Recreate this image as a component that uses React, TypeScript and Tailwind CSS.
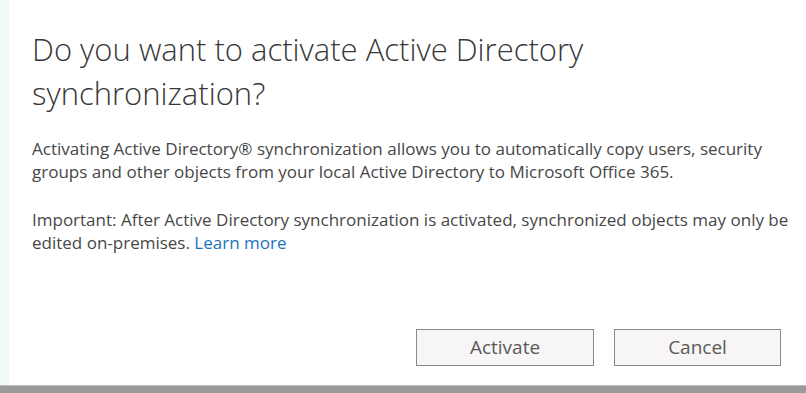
import React from "react";

export default function App() {
  return (
    <div className="flex h-[393px] w-[806px] flex-col overflow-hidden bg-white" style={{ fontFamily: '"Open Sans", "Noto Sans", sans-serif' }}>
      <div className="flex flex-1">
        <div className="w-[9px] shrink-0 bg-[#f2faf8]" />
        <div className="flex min-w-0 flex-1 flex-col pl-[23px] pr-[25px]">
          <h1 className="mt-[27px] text-[31px] font-light leading-[44px] text-[#383838]">
            Do you want to activate Active Directory
            <br />
            synchronization?
          </h1>
          <p className="mt-[22px] whitespace-nowrap text-[17px] leading-[23px] text-[#474747]">
            Activating Active Directory® synchronization allows you to automatically copy users, security
            <br />
            groups and other objects from your local Active Directory to Microsoft Office 365.
          </p>
          <p className="mt-[25px] whitespace-nowrap text-[17px] leading-[23px] text-[#474747]">
            Important: After Active Directory synchronization is activated, synchronized objects may only be
            <br />
            edited on-premises. <span className="text-[#1a73c0]">Learn more</span>
          </p>
          <div className="mt-auto mb-[19px] flex justify-end gap-[20px]">
            <button className="h-[37px] w-[178px] border border-[#8a8a8a] bg-[#f7f5f5] text-[19px] text-[#5a5a5a]">
              Activate
            </button>
            <button className="h-[37px] w-[167px] border border-[#8a8a8a] bg-[#f7f5f5] text-[19px] text-[#5a5a5a]">
              Cancel
            </button>
          </div>
        </div>
      </div>
      <div className="h-[8px] border-t border-[#bdbdbd] bg-[#9a9a9a]" />
    </div>
  );
}
